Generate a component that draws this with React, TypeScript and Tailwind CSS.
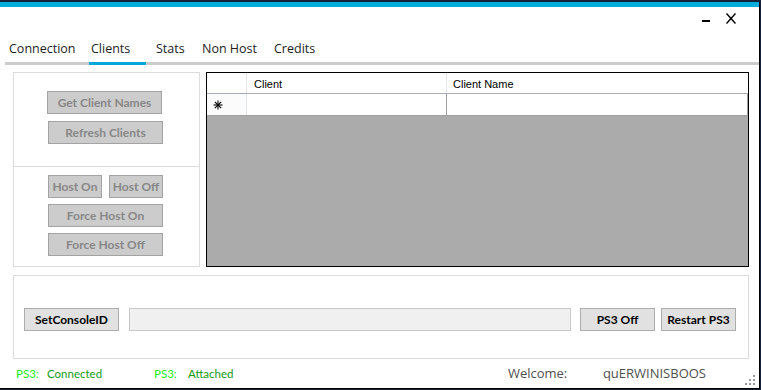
import React from "react";

const ui = { fontFamily: '"Open Sans", "Liberation Sans", sans-serif' };
const lato = { fontFamily: 'Lato, "Open Sans", sans-serif' };
const ms = { fontFamily: '"Liberation Sans", Arial, sans-serif' };

function GrayButton({ label, w, className = "" }: { label: string; w: string; className?: string }) {
  return (
    <div
      className={`${w} h-[23px] flex items-center justify-center bg-[#cccccc] border border-[#a3a3a3] text-[12px] font-bold text-[#878787] ${className}`}
      style={lato}
    >
      {label}
    </div>
  );
}

function ActionButton({ label, w }: { label: string; w: string }) {
  return (
    <div
      className={`${w} h-[23px] flex items-center justify-center bg-[#e1e1e1] border border-[#adadad] text-[12px] font-bold text-black`}
      style={lato}
    >
      {label}
    </div>
  );
}

function Tabs() {
  return (
    <div className="flex h-[31px] ml-[5px] text-[12.5px] text-[#1e1e1e]" style={ui}>
      <div className="w-[84px] pl-[4px] pt-[6px] border-b-[3px] border-[#cccccc]">Connection</div>
      <div className="w-[57px] pl-[2px] pt-[6px] border-b-[3px] border-[#00a9d9]">Clients</div>
      <div className="flex-1 flex pl-[10px] pt-[6px] border-b-[3px] border-[#cccccc]">
        <div className="w-[46px]">Stats</div>
        <div className="w-[72px]">Non Host</div>
        <div>Credits</div>
      </div>
    </div>
  );
}

function NewRowGlyph() {
  return (
    <svg width="10" height="10" viewBox="0 0 10 10" className="block">
      <g stroke="#000" strokeWidth="1.1">
        <line x1="5" y1="0.5" x2="5" y2="9.5" />
        <line x1="0.5" y1="5" x2="9.5" y2="5" />
        <line x1="1.8" y1="1.8" x2="8.2" y2="8.2" />
        <line x1="8.2" y1="1.8" x2="1.8" y2="8.2" />
      </g>
    </svg>
  );
}

function ClientGrid() {
  return (
    <div className="w-[543px] h-[195px] border-[1.5px] border-black bg-[#ababab] flex flex-col" style={ms}>
      <div className="h-[21px] flex bg-white border-b border-[#a5abb6] text-[11px] text-black">
        <div className="w-[40px] border-r border-[#e2e7ef]" />
        <div className="w-[200px] pl-[7px] pt-[3px] border-r border-[#e2e7ef]">Client</div>
        <div className="flex-1 pl-[6px] pt-[3px]">Client Name</div>
      </div>
      <div className="h-[22px] flex bg-white border-b border-[#a0a0a0]">
        <div className="w-[40px] flex items-center pl-[6px] bg-[#fbfbfb] border-r border-[#dfe4ec]">
          <NewRowGlyph />
        </div>
        <div className="w-[200px] border-r border-[#a0a0a0]" />
        <div className="flex-1 border-r border-[#a0a0a0]" />
      </div>
    </div>
  );
}

function LeftPanel() {
  return (
    <div className="w-[187px] h-[195px] border border-[#dcdcdc] flex flex-col">
      <div className="h-[94px] border-b border-[#dcdcdc] pt-[18px] pl-[33px] flex flex-col gap-[7px]">
        <GrayButton label="Get Client Names" w="w-[115px]" />
        <GrayButton label="Refresh Clients" w="w-[115px]" className="ml-[1px]" />
      </div>
      <div className="flex-1 pt-[8px] pl-[34px] flex flex-col gap-[6px]">
        <div className="flex gap-[7px]">
          <GrayButton label="Host On" w="w-[54px]" />
          <GrayButton label="Host Off" w="w-[54px]" />
        </div>
        <GrayButton label="Force Host On" w="w-[115px]" />
        <GrayButton label="Force Host Off" w="w-[115px]" />
      </div>
    </div>
  );
}

function ResizeGrip() {
  const dots = [
    [8, 0],
    [4, 4],
    [8, 4],
    [0, 8],
    [4, 8],
    [8, 8],
  ];
  return (
    <svg width="10" height="10" viewBox="0 0 10 10" className="absolute right-[4px] bottom-[3px]">
      {dots.map(([x, y], i) => (
        <rect key={i} x={x} y={y} width="2" height="2" fill="#9a9a9a" />
      ))}
    </svg>
  );
}

export default function App() {
  return (
    <div className="w-[761px] h-[390px] bg-[#15203a] pt-[2px] overflow-hidden">
      <div className="relative w-[760px] h-[387px] bg-white border-r border-b border-black flex flex-col">
        <div className="h-[5px] bg-[#00acd9]" />

        {/* title bar */}
        <div className="h-[27px] flex justify-end items-start pt-[6px] pr-[23px] gap-[16px]">
          <svg width="8" height="11" viewBox="0 0 8 11" className="block">
            <rect x="0" y="7" width="8" height="2" fill="#000" />
          </svg>
          <svg width="10" height="11" viewBox="0 0 10 11" className="block">
            <g stroke="#000" strokeWidth="1.4">
              <line x1="0.5" y1="0.5" x2="9.5" y2="10.5" />
              <line x1="9.5" y1="0.5" x2="0.5" y2="10.5" />
            </g>
          </svg>
        </div>

        <Tabs />

        <div className="pl-[13px] pt-[7px] flex flex-col">
          <div className="flex gap-[6px]">
            <LeftPanel />
            <ClientGrid />
          </div>

          <div className="mt-[8px] w-[736px] h-[84px] border border-[#dcdcdc] pt-[32px] pl-[10px] flex items-start">
            <ActionButton label="SetConsoleID" w="w-[95px]" />
            <div className="ml-[10px] w-[442px] h-[23px] bg-[#f0f0f0] border border-[#c9c9c9]" />
            <div className="ml-[9px]">
              <ActionButton label="PS3 Off" w="w-[75px]" />
            </div>
            <div className="ml-[6px]">
              <ActionButton label="Restart PS3" w="w-[75px]" />
            </div>
          </div>

          <div className="flex items-center h-[26px] pt-[4px] text-[11.5px]" style={lato}>
            <span className="ml-[3px] w-[31px] text-[#1cf01c]">PS3:</span>
            <span className="w-[107px] text-[#159a15]">Connected</span>
            <span className="w-[34px] text-[#1cf01c]">PS3:</span>
            <span className="text-[#159a15]">Attached</span>
            <span className="ml-auto mr-[53px] flex text-[13px] text-[#505050]" style={ui}>
              <span className="w-[95px]">Welcome:</span>
              <span>quERWINISBOOS</span>
            </span>
          </div>
        </div>

        <ResizeGrip />
      </div>
    </div>
  );
}
